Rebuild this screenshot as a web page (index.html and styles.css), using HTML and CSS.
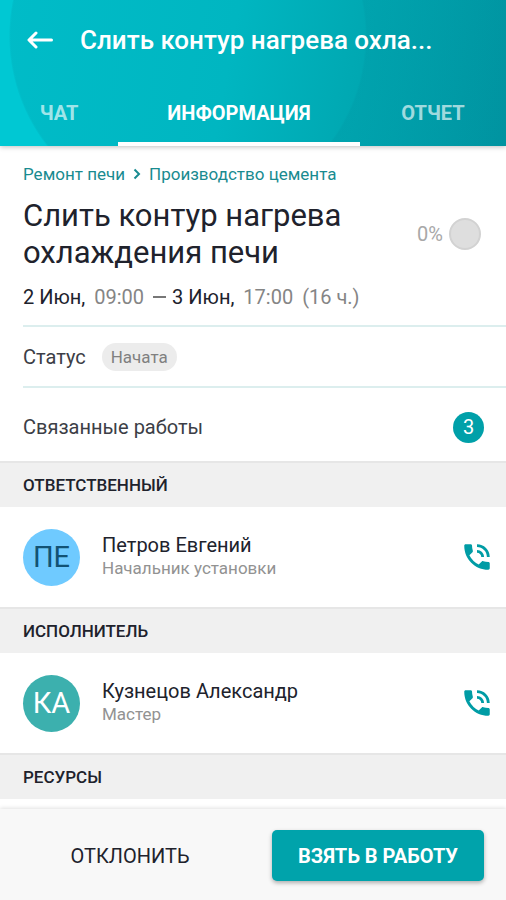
FILE: index.html
```html
<!DOCTYPE html>
<html lang="ru">
<head>
<meta charset="utf-8">
<meta name="viewport" content="width=device-width, initial-scale=1">
<title>Слить контур нагрева охлаждения печи</title>
<link rel="stylesheet" href="styles.css">
</head>
<body>
<div class="app">
  <header class="top">
    <div class="toolbar">
      <button class="icon-button" type="button" aria-label="Назад">
        <svg width="26" height="18" viewBox="0 0 26 18" fill="none" stroke="currentColor" stroke-width="3" stroke-linejoin="round" stroke-linecap="round"><path d="M24.500 9H3M9 2L2 9l7 7"/></svg>
      </button>
      <div class="toolbar-title">Слить контур нагрева охла...</div>
    </div>
    <nav class="tabs">
      <a class="tab" href="#chat">ЧАТ</a>
      <a class="tab tab-active" href="#info" aria-current="page">ИНФОРМАЦИЯ</a>
      <a class="tab" href="#report">ОТЧЕТ</a>
    </nav>
  </header>

  <main class="content">
    <section class="summary">
      <nav class="crumbs">
        <a href="#repair">Ремонт печи</a>
        <svg width="8" height="12" viewBox="0 0 8 12" fill="none" stroke="currentColor" stroke-width="2"><path d="M1.500 1.500L6 6l-4.500 4.500"/></svg>
        <a href="#cement">Производство цемента</a>
      </nav>
      <div class="heading">
        <h1>Слить контур нагрева охлаждения печи</h1>
        <div class="progress"><span>0%</span><span class="dial"></span></div>
      </div>
      <p class="dates"><span>2 Июн,</span><time>09:00</time><span class="until"><i class="dash"></i>3 Июн,</span><time>17:00</time><time>(16 ч.)</time></p>
    </section>
    <div class="row status"><span class="label">Статус</span><span class="chip">Начата</span></div>
    <div class="row related"><span class="label">Связанные работы</span><span class="count">3</span></div>

    <h2>ОТВЕТСТВЕННЫЙ</h2>
    <div class="person">
      <span class="avatar avatar-blue">ПЕ</span>
      <div class="who"><div class="name">Петров Евгений</div><div class="role">Начальник установки</div></div>
      <button class="icon-button call" type="button" aria-label="Позвонить: Петров Евгений">
        <svg width="34" height="34" viewBox="0 0 24 24" fill="currentColor"><path d="M20 15.500c-1.250 0-2.450-.2-3.570-.57-.1-.03-.21-.05-.31-.05-.26 0-.51.1-.71.29l-2.200 2.200a15.050 15.050 0 0 1-6.590-6.580l2.200-2.210c.28-.27.36-.66.25-1.010A11.360 11.360 0 0 1 8.500 4c0-.55-.45-1-1-1H4c-.55 0-1 .45-1 1 0 9.390 7.610 17 17 17 .55 0 1-.45 1-1v-3.500c0-.55-.45-1-1-1zM19 12h2a9 9 0 0 0-9-9v2c3.870 0 7 3.130 7 7zm-4 0h2c0-2.760-2.240-5-5-5v2c1.660 0 3 1.340 3 3z"/></svg>
      </button>
    </div>

    <h2>ИСПОЛНИТЕЛЬ</h2>
    <div class="person">
      <span class="avatar avatar-teal">КА</span>
      <div class="who"><div class="name">Кузнецов Александр</div><div class="role">Мастер</div></div>
      <button class="icon-button call" type="button" aria-label="Позвонить: Кузнецов Александр">
        <svg width="34" height="34" viewBox="0 0 24 24" fill="currentColor"><path d="M20 15.500c-1.250 0-2.450-.2-3.570-.57-.1-.03-.21-.05-.31-.05-.26 0-.51.1-.71.29l-2.200 2.200a15.050 15.050 0 0 1-6.590-6.580l2.200-2.210c.28-.27.36-.66.25-1.010A11.360 11.360 0 0 1 8.500 4c0-.55-.45-1-1-1H4c-.55 0-1 .45-1 1 0 9.390 7.610 17 17 17 .55 0 1-.45 1-1v-3.500c0-.55-.45-1-1-1zM19 12h2a9 9 0 0 0-9-9v2c3.870 0 7 3.130 7 7zm-4 0h2c0-2.760-2.240-5-5-5v2c1.660 0 3 1.340 3 3z"/></svg>
      </button>
    </div>

    <h2>РЕСУРСЫ</h2>
  </main>

  <footer class="actions">
    <button class="action action-plain" type="button">ОТКЛОНИТЬ</button>
    <button class="action action-main" type="button">ВЗЯТЬ В РАБОТУ</button>
  </footer>
</div>
</body>
</html>
```
FILE: styles.css
```css
* { box-sizing: border-box; }

body {
  margin: 0;
  background: #fff;
  color: #20222c;
  font-family: Roboto, "Liberation Sans", sans-serif;
  font-size: 20px;
  line-height: 24px;
}

h1, h2, p { margin: 0; font-weight: 400; }
a { color: inherit; text-decoration: none; }
button { border: 0; padding: 0; font: inherit; color: inherit; background: none; cursor: pointer; }
svg { display: block; }

.app {
  min-height: 100vh;
  display: flex;
  flex-direction: column;
}

.top {
  color: #fff;
  background:
    radial-gradient(circle at 188px 36px, transparent 177px, #00c8d3 179px) left / 100px 100% no-repeat,
    radial-gradient(circle at 188px 36px, transparent 177px, rgba(0, 140, 155, 0.2) 179px, transparent 340px),
    linear-gradient(100deg, #00bcc8 0%, #00b6c1 45%, #00a8b2 70%, #0093a0 100%);
  box-shadow: 0 1px 5px rgba(0, 0, 0, 0.25);
}

.toolbar {
  display: flex;
  align-items: center;
  gap: 27px;
  height: 79px;
  padding: 0 27px;
}

.toolbar-title {
  font-size: 26px;
  font-weight: 500;
  line-height: 32px;
  white-space: nowrap;
}

.tabs {
  display: grid;
  grid-template-columns: 118fr 242fr 146fr;
  height: 67px;
}

.tab {
  display: flex;
  align-items: center;
  justify-content: center;
  border-bottom: 4px solid transparent;
  border-top: 4px solid transparent;
  font-weight: 700;
  color: rgba(255, 255, 255, 0.65);
}

.tab-active { color: #fff; border-bottom-color: #fff; }

.content { flex: 1; }

.summary { padding: 16px 25px 16px 23px; }

.crumbs {
  display: flex;
  align-items: center;
  gap: 8px;
  color: #198b90;
  font-size: 17px;
}

.heading {
  display: flex;
  align-items: center;
  justify-content: space-between;
  margin-top: 11px;
}

h1 { max-width: 350px; font-size: 31px; line-height: 37px; }

.progress {
  display: flex;
  align-items: center;
  gap: 6px;
  color: #a8a8a8;
}

.dial {
  width: 32px;
  height: 32px;
  border: 2px solid #d2d2d2;
  border-radius: 50%;
  background: #dedede;
}

.dates { display: flex; gap: 9px; margin-top: 14px; }
.dates time { color: #858585; }
.until { display: flex; align-items: center; gap: 6px; }
.dash { width: 13px; height: 2px; background: #777; }

.row {
  display: flex;
  align-items: center;
  margin-left: 23px;
  border-top: 2px solid #dceeee;
}

.status { height: 61px; gap: 16px; }
.related { height: 75px; padding-right: 22px; justify-content: space-between; padding-top: 5px; }
.label { color: #3c3e46; }

.chip {
  padding: 2px 9px;
  border-radius: 14px;
  background: #ececec;
  color: #808080;
  font-size: 17px;
}

.count {
  width: 31px;
  border-radius: 50%;
  background: #00a0a9;
  color: #fff;
  line-height: 31px;
  text-align: center;
}

h2 {
  padding: 10px 23px;
  border-top: 2px solid #e6e6e6;
  background: #f0f0f0;
  font-size: 17px;
  font-weight: 500;
}

.person {
  display: flex;
  align-items: center;
  gap: 22px;
  height: 100px;
  padding: 0 12px 0 23px;
}

.avatar {
  width: 57px;
  border-radius: 50%;
  font-size: 29px;
  line-height: 57px;
  text-align: center;
}

.avatar-blue { background: #6fcaff; color: #125274; }
.avatar-teal { background: #3cb0ae; color: #fff; }

.who { flex: 1; padding-bottom: 3px; }
.role { color: #929292; font-size: 17px; line-height: 22px; }
.call { color: #009ca5; }

.actions {
  display: flex;
  align-items: center;
  padding: 21px 22px 19px 0;
  background: #f8f8f8;
  box-shadow: 0 -1px 4px rgba(0, 0, 0, 0.12);
}

.action { height: 51px; font-size: 20px; }
.action-plain { flex: 1; padding-right: 12px; }

.action-main {
  padding: 0 26px;
  border-radius: 5px;
  background: #00a3ab;
  color: #fff;
  font-weight: 700;
  box-shadow: 0 2px 4px rgba(0, 0, 0, 0.3);
}
```
